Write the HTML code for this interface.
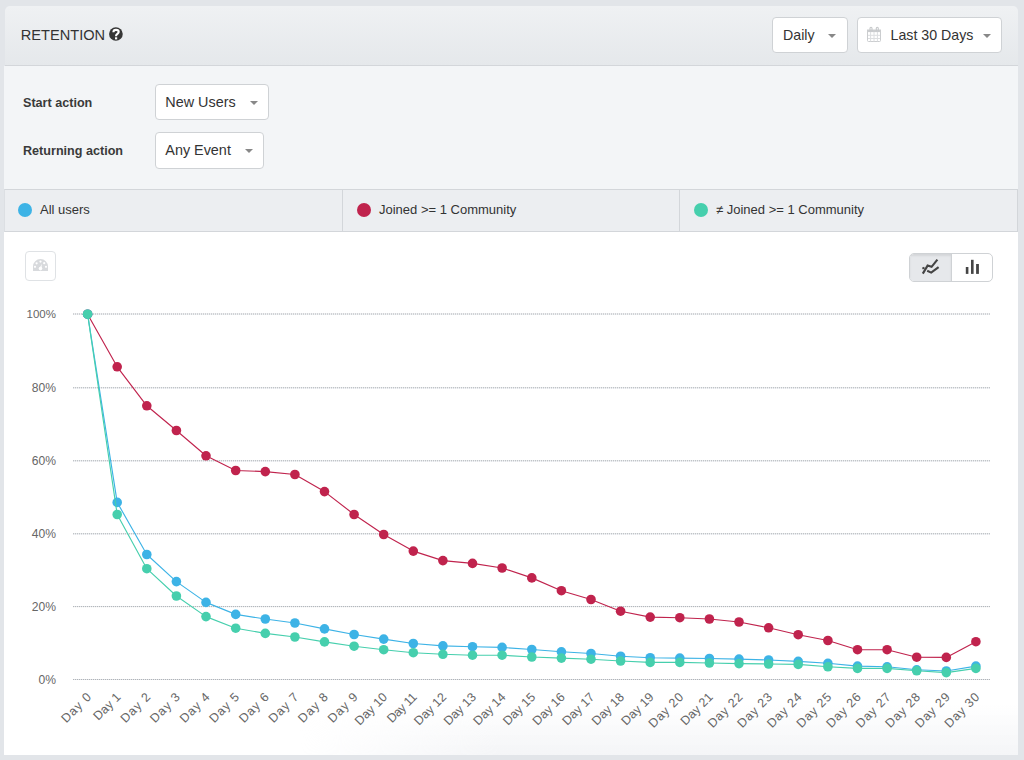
<!DOCTYPE html>
<html><head><meta charset="utf-8">
<style>
*{box-sizing:border-box;margin:0;padding:0}
html,body{width:1024px;height:760px;overflow:hidden;background:#e2e5e9;font-family:"Liberation Sans",sans-serif;color:#333}
.abs{position:absolute}
#hdr{position:absolute;left:5px;top:6px;width:1013px;height:60px;background:linear-gradient(#eff1f3,#e5e8eb);border-bottom:1px solid #d3d6da;border-radius:5px 5px 0 0}
#title{position:absolute;left:15.8px;top:20.5px;font-size:14.6px;color:#333}
.qm{position:absolute;left:104px;top:20.8px;width:14px;height:14px;border-radius:50%;background:#383838;color:#fff;font-size:11px;font-weight:bold;text-align:center;line-height:14px}
.btn{position:absolute;background:#fff;border:1px solid #cfd2d5;border-radius:4px;font-size:14.2px;color:#333}
.btn span{position:absolute;top:9px}
.caret{position:absolute;width:0;height:0;border-left:4.2px solid transparent;border-right:4.2px solid transparent;border-top:4.6px solid #888}
#filters{position:absolute;left:4px;top:66px;width:1014px;height:123px;background:#f3f5f7}
.lbl{position:absolute;left:19px;font-size:12.6px;font-weight:bold;color:#3a3a3a}
#legend{position:absolute;left:4px;top:189px;width:1014px;height:43px;background:#eceef1;border:1px solid #d3d6da;border-left-color:#dcdfe3}
.lcol{position:absolute;top:0;height:41px}
.dot{position:absolute;top:12.6px;width:14px;height:14px;border-radius:50%}
.ltxt{position:absolute;top:12px;font-size:13px;color:#333}
#chart{position:absolute;left:4px;top:232px;width:1014px;height:523px;background:#fff}
#shade{position:absolute;left:300px;top:705px;width:718px;height:50px;background:linear-gradient(rgba(244,245,247,0),rgba(244,245,247,1));-webkit-mask-image:linear-gradient(to right,transparent 0,#000 200px)}
svg text{font-family:"Liberation Sans",sans-serif;fill:#666}
.yl{font-size:11.5px}
.xl{font-size:12.5px}
</style></head><body>
<div id="hdr">
  <div id="title">RETENTION</div>
  <div class="btn" style="left:767px;top:11px;width:75.5px;height:36.4px"><span style="left:10px">Daily</span><div class="caret" style="left:55.2px;top:15.6px"></div></div>
  <div class="btn" style="left:851.6px;top:11px;width:145.4px;height:36.2px">

   <span style="left:33px">Last 30 Days</span><div class="caret" style="left:125.5px;top:15.6px"></div></div>
</div>
<div id="filters">
  <div class="lbl" style="top:30px">Start action</div>
  <div class="lbl" style="top:78px">Returning action</div>
  <div class="btn" style="left:150.7px;top:18.2px;width:114px;height:36.3px"><span style="left:9.6px;font-size:14.4px">New Users</span><div class="caret" style="left:94px;top:15.6px"></div></div>
  <div class="btn" style="left:150.7px;top:66.3px;width:109px;height:36.3px"><span style="left:9.6px;font-size:14.4px">Any Event</span><div class="caret" style="left:89px;top:15.6px"></div></div>
</div>
<div id="legend">
  <div class="lcol" style="left:0;width:337px"><div class="dot" style="left:13px;background:#3db3e6"></div><div class="ltxt" style="left:35px">All users</div></div>
  <div class="lcol" style="left:337px;width:337px;border-left:1px solid #d3d6da"><div class="dot" style="left:14px;background:#c0234d"></div><div class="ltxt" style="left:36px">Joined &gt;= 1 Community</div></div>
  <div class="lcol" style="left:674px;width:338px;border-left:1px solid #d3d6da"><div class="dot" style="left:14px;background:#46cfad"></div><div class="ltxt" style="left:36px">&ne; Joined &gt;= 1 Community</div></div>
</div>
<div id="chart">
  <div style="position:absolute;left:21px;top:18.6px;width:31px;height:30px;border:1px solid #dfe2e5;border-radius:4px"></div>
  <div style="position:absolute;left:905px;top:21px;width:84px;height:29px;border:1px solid #cfd2d5;border-radius:5px;overflow:hidden;background:#fff">
   <div style="position:absolute;left:0;top:0;width:42px;height:27px;background:#e6e8eb;border-right:1px solid #cfd2d5;box-shadow:inset 0 2px 2px rgba(0,0,0,0.08)"></div>
  </div>
</div>
<div id="shade"></div>
<svg style="position:absolute;left:0;top:0" width="1024" height="760">
<line x1="73" y1="314.0" x2="990" y2="314.0" stroke="#e2e5e9" stroke-width="1"/>
<line x1="73" y1="314.0" x2="990" y2="314.0" stroke="#b0b3b7" stroke-width="1" stroke-dasharray="1,1"/>
<text x="56" y="318.3" text-anchor="end" class="yl" style="font-size:11.5px">100%</text>
<line x1="73" y1="387.8" x2="990" y2="387.8" stroke="#e2e5e9" stroke-width="1"/>
<line x1="73" y1="387.8" x2="990" y2="387.8" stroke="#b0b3b7" stroke-width="1" stroke-dasharray="1,1"/>
<text x="56" y="392.1" text-anchor="end" class="yl" style="font-size:12.1px">80%</text>
<line x1="73" y1="460.8" x2="990" y2="460.8" stroke="#e2e5e9" stroke-width="1"/>
<line x1="73" y1="460.8" x2="990" y2="460.8" stroke="#b0b3b7" stroke-width="1" stroke-dasharray="1,1"/>
<text x="56" y="465.1" text-anchor="end" class="yl" style="font-size:12.1px">60%</text>
<line x1="73" y1="533.8" x2="990" y2="533.8" stroke="#e2e5e9" stroke-width="1"/>
<line x1="73" y1="533.8" x2="990" y2="533.8" stroke="#b0b3b7" stroke-width="1" stroke-dasharray="1,1"/>
<text x="56" y="538.1" text-anchor="end" class="yl" style="font-size:12.1px">40%</text>
<line x1="73" y1="606.6" x2="990" y2="606.6" stroke="#e2e5e9" stroke-width="1"/>
<line x1="73" y1="606.6" x2="990" y2="606.6" stroke="#b0b3b7" stroke-width="1" stroke-dasharray="1,1"/>
<text x="56" y="610.9" text-anchor="end" class="yl" style="font-size:12.1px">20%</text>
<line x1="73" y1="679.5" x2="990" y2="679.5" stroke="#e2e5e9" stroke-width="1"/>
<line x1="73" y1="679.5" x2="990" y2="679.5" stroke="#b0b3b7" stroke-width="1" stroke-dasharray="1,1"/>
<text x="56" y="683.8" text-anchor="end" class="yl" style="font-size:12.1px">0%</text>
<text transform="translate(91.90,697.9) rotate(-45)" text-anchor="end" class="xl" textLength="36.3">Day 0</text>
<text transform="translate(121.51,697.9) rotate(-45)" text-anchor="end" class="xl" textLength="32.8">Day 1</text>
<text transform="translate(151.12,697.9) rotate(-45)" text-anchor="end" class="xl" textLength="36.3">Day 2</text>
<text transform="translate(180.73,697.9) rotate(-45)" text-anchor="end" class="xl" textLength="36.3">Day 3</text>
<text transform="translate(210.34,697.9) rotate(-45)" text-anchor="end" class="xl" textLength="36.3">Day 4</text>
<text transform="translate(239.95,697.9) rotate(-45)" text-anchor="end" class="xl" textLength="36.3">Day 5</text>
<text transform="translate(269.56,697.9) rotate(-45)" text-anchor="end" class="xl" textLength="36.3">Day 6</text>
<text transform="translate(299.17,697.9) rotate(-45)" text-anchor="end" class="xl" textLength="36.3">Day 7</text>
<text transform="translate(328.78,697.9) rotate(-45)" text-anchor="end" class="xl" textLength="36.3">Day 8</text>
<text transform="translate(358.39,697.9) rotate(-45)" text-anchor="end" class="xl" textLength="36.3">Day 9</text>
<text transform="translate(388.00,697.9) rotate(-45)" text-anchor="end" class="xl" textLength="39.8">Day 10</text>
<text transform="translate(417.61,697.9) rotate(-45)" text-anchor="end" class="xl" textLength="36.3">Day 11</text>
<text transform="translate(447.22,697.9) rotate(-45)" text-anchor="end" class="xl" textLength="39.8">Day 12</text>
<text transform="translate(476.83,697.9) rotate(-45)" text-anchor="end" class="xl" textLength="39.8">Day 13</text>
<text transform="translate(506.44,697.9) rotate(-45)" text-anchor="end" class="xl" textLength="39.8">Day 14</text>
<text transform="translate(536.05,697.9) rotate(-45)" text-anchor="end" class="xl" textLength="39.8">Day 15</text>
<text transform="translate(565.66,697.9) rotate(-45)" text-anchor="end" class="xl" textLength="39.8">Day 16</text>
<text transform="translate(595.27,697.9) rotate(-45)" text-anchor="end" class="xl" textLength="39.8">Day 17</text>
<text transform="translate(624.88,697.9) rotate(-45)" text-anchor="end" class="xl" textLength="39.8">Day 18</text>
<text transform="translate(654.49,697.9) rotate(-45)" text-anchor="end" class="xl" textLength="39.8">Day 19</text>
<text transform="translate(684.10,697.9) rotate(-45)" text-anchor="end" class="xl" textLength="43.3">Day 20</text>
<text transform="translate(713.71,697.9) rotate(-45)" text-anchor="end" class="xl" textLength="39.8">Day 21</text>
<text transform="translate(743.32,697.9) rotate(-45)" text-anchor="end" class="xl" textLength="43.3">Day 22</text>
<text transform="translate(772.93,697.9) rotate(-45)" text-anchor="end" class="xl" textLength="43.3">Day 23</text>
<text transform="translate(802.54,697.9) rotate(-45)" text-anchor="end" class="xl" textLength="43.3">Day 24</text>
<text transform="translate(832.15,697.9) rotate(-45)" text-anchor="end" class="xl" textLength="43.3">Day 25</text>
<text transform="translate(861.76,697.9) rotate(-45)" text-anchor="end" class="xl" textLength="43.3">Day 26</text>
<text transform="translate(891.37,697.9) rotate(-45)" text-anchor="end" class="xl" textLength="43.3">Day 27</text>
<text transform="translate(920.98,697.9) rotate(-45)" text-anchor="end" class="xl" textLength="43.3">Day 28</text>
<text transform="translate(950.59,697.9) rotate(-45)" text-anchor="end" class="xl" textLength="43.3">Day 29</text>
<text transform="translate(980.20,697.9) rotate(-45)" text-anchor="end" class="xl" textLength="43.3">Day 30</text>
<polyline points="87.6,314.2 117.2,366.8 146.8,405.8 176.4,430.5 206.0,455.8 235.7,470.5 265.3,471.6 294.9,474.5 324.5,491.6 354.1,514.5 383.7,534.5 413.3,551.1 442.9,560.6 472.5,563.4 502.1,568.0 531.8,577.9 561.4,590.7 591.0,599.5 620.6,611.2 650.2,617.1 679.8,617.7 709.4,619.0 739.0,622.0 768.6,627.8 798.2,634.7 827.9,640.5 857.5,649.7 887.1,649.7 916.7,657.2 946.3,657.4 975.9,641.7" fill="none" stroke="#c0234d" stroke-width="1.15" stroke-linejoin="round"/>
<circle cx="87.6" cy="314.2" r="4.8" fill="#c0234d"/><circle cx="117.2" cy="366.8" r="4.8" fill="#c0234d"/><circle cx="146.8" cy="405.8" r="4.8" fill="#c0234d"/><circle cx="176.4" cy="430.5" r="4.8" fill="#c0234d"/><circle cx="206.0" cy="455.8" r="4.8" fill="#c0234d"/><circle cx="235.7" cy="470.5" r="4.8" fill="#c0234d"/><circle cx="265.3" cy="471.6" r="4.8" fill="#c0234d"/><circle cx="294.9" cy="474.5" r="4.8" fill="#c0234d"/><circle cx="324.5" cy="491.6" r="4.8" fill="#c0234d"/><circle cx="354.1" cy="514.5" r="4.8" fill="#c0234d"/><circle cx="383.7" cy="534.5" r="4.8" fill="#c0234d"/><circle cx="413.3" cy="551.1" r="4.8" fill="#c0234d"/><circle cx="442.9" cy="560.6" r="4.8" fill="#c0234d"/><circle cx="472.5" cy="563.4" r="4.8" fill="#c0234d"/><circle cx="502.1" cy="568.0" r="4.8" fill="#c0234d"/><circle cx="531.8" cy="577.9" r="4.8" fill="#c0234d"/><circle cx="561.4" cy="590.7" r="4.8" fill="#c0234d"/><circle cx="591.0" cy="599.5" r="4.8" fill="#c0234d"/><circle cx="620.6" cy="611.2" r="4.8" fill="#c0234d"/><circle cx="650.2" cy="617.1" r="4.8" fill="#c0234d"/><circle cx="679.8" cy="617.7" r="4.8" fill="#c0234d"/><circle cx="709.4" cy="619.0" r="4.8" fill="#c0234d"/><circle cx="739.0" cy="622.0" r="4.8" fill="#c0234d"/><circle cx="768.6" cy="627.8" r="4.8" fill="#c0234d"/><circle cx="798.2" cy="634.7" r="4.8" fill="#c0234d"/><circle cx="827.9" cy="640.5" r="4.8" fill="#c0234d"/><circle cx="857.5" cy="649.7" r="4.8" fill="#c0234d"/><circle cx="887.1" cy="649.7" r="4.8" fill="#c0234d"/><circle cx="916.7" cy="657.2" r="4.8" fill="#c0234d"/><circle cx="946.3" cy="657.4" r="4.8" fill="#c0234d"/><circle cx="975.9" cy="641.7" r="4.8" fill="#c0234d"/>

<polyline points="87.6,314.2 117.2,502.4 146.8,554.5 176.4,581.6 206.0,602.4 235.7,614.4 265.3,619.0 294.9,623.0 324.5,628.9 354.1,634.5 383.7,639.1 413.3,643.5 442.9,645.9 472.5,646.7 502.1,647.4 531.8,649.5 561.4,651.8 591.0,653.5 620.6,656.2 650.2,657.7 679.8,658.1 709.4,658.5 739.0,659.1 768.6,660.0 798.2,661.4 827.9,663.3 857.5,666.1 887.1,666.8 916.7,669.8 946.3,671.0 975.9,666.1" fill="none" stroke="#3db3e6" stroke-width="1.15" stroke-linejoin="round"/>
<circle cx="87.6" cy="314.2" r="4.8" fill="#3db3e6"/><circle cx="117.2" cy="502.4" r="4.8" fill="#3db3e6"/><circle cx="146.8" cy="554.5" r="4.8" fill="#3db3e6"/><circle cx="176.4" cy="581.6" r="4.8" fill="#3db3e6"/><circle cx="206.0" cy="602.4" r="4.8" fill="#3db3e6"/><circle cx="235.7" cy="614.4" r="4.8" fill="#3db3e6"/><circle cx="265.3" cy="619.0" r="4.8" fill="#3db3e6"/><circle cx="294.9" cy="623.0" r="4.8" fill="#3db3e6"/><circle cx="324.5" cy="628.9" r="4.8" fill="#3db3e6"/><circle cx="354.1" cy="634.5" r="4.8" fill="#3db3e6"/><circle cx="383.7" cy="639.1" r="4.8" fill="#3db3e6"/><circle cx="413.3" cy="643.5" r="4.8" fill="#3db3e6"/><circle cx="442.9" cy="645.9" r="4.8" fill="#3db3e6"/><circle cx="472.5" cy="646.7" r="4.8" fill="#3db3e6"/><circle cx="502.1" cy="647.4" r="4.8" fill="#3db3e6"/><circle cx="531.8" cy="649.5" r="4.8" fill="#3db3e6"/><circle cx="561.4" cy="651.8" r="4.8" fill="#3db3e6"/><circle cx="591.0" cy="653.5" r="4.8" fill="#3db3e6"/><circle cx="620.6" cy="656.2" r="4.8" fill="#3db3e6"/><circle cx="650.2" cy="657.7" r="4.8" fill="#3db3e6"/><circle cx="679.8" cy="658.1" r="4.8" fill="#3db3e6"/><circle cx="709.4" cy="658.5" r="4.8" fill="#3db3e6"/><circle cx="739.0" cy="659.1" r="4.8" fill="#3db3e6"/><circle cx="768.6" cy="660.0" r="4.8" fill="#3db3e6"/><circle cx="798.2" cy="661.4" r="4.8" fill="#3db3e6"/><circle cx="827.9" cy="663.3" r="4.8" fill="#3db3e6"/><circle cx="857.5" cy="666.1" r="4.8" fill="#3db3e6"/><circle cx="887.1" cy="666.8" r="4.8" fill="#3db3e6"/><circle cx="916.7" cy="669.8" r="4.8" fill="#3db3e6"/><circle cx="946.3" cy="671.0" r="4.8" fill="#3db3e6"/><circle cx="975.9" cy="666.1" r="4.8" fill="#3db3e6"/>

<polyline points="87.6,314.2 117.2,514.5 146.8,568.7 176.4,596.0 206.0,616.6 235.7,628.2 265.3,633.4 294.9,637.0 324.5,641.9 354.1,646.2 383.7,649.7 413.3,652.7 442.9,654.3 472.5,655.2 502.1,655.2 531.8,657.0 561.4,658.1 591.0,659.2 620.6,661.0 650.2,662.4 679.8,662.4 709.4,663.0 739.0,663.6 768.6,664.0 798.2,664.4 827.9,666.8 857.5,668.4 887.1,668.4 916.7,670.8 946.3,672.6 975.9,668.4" fill="none" stroke="#46cfad" stroke-width="1.15" stroke-linejoin="round"/>
<circle cx="87.6" cy="314.2" r="4.8" fill="#46cfad"/><circle cx="117.2" cy="514.5" r="4.8" fill="#46cfad"/><circle cx="146.8" cy="568.7" r="4.8" fill="#46cfad"/><circle cx="176.4" cy="596.0" r="4.8" fill="#46cfad"/><circle cx="206.0" cy="616.6" r="4.8" fill="#46cfad"/><circle cx="235.7" cy="628.2" r="4.8" fill="#46cfad"/><circle cx="265.3" cy="633.4" r="4.8" fill="#46cfad"/><circle cx="294.9" cy="637.0" r="4.8" fill="#46cfad"/><circle cx="324.5" cy="641.9" r="4.8" fill="#46cfad"/><circle cx="354.1" cy="646.2" r="4.8" fill="#46cfad"/><circle cx="383.7" cy="649.7" r="4.8" fill="#46cfad"/><circle cx="413.3" cy="652.7" r="4.8" fill="#46cfad"/><circle cx="442.9" cy="654.3" r="4.8" fill="#46cfad"/><circle cx="472.5" cy="655.2" r="4.8" fill="#46cfad"/><circle cx="502.1" cy="655.2" r="4.8" fill="#46cfad"/><circle cx="531.8" cy="657.0" r="4.8" fill="#46cfad"/><circle cx="561.4" cy="658.1" r="4.8" fill="#46cfad"/><circle cx="591.0" cy="659.2" r="4.8" fill="#46cfad"/><circle cx="620.6" cy="661.0" r="4.8" fill="#46cfad"/><circle cx="650.2" cy="662.4" r="4.8" fill="#46cfad"/><circle cx="679.8" cy="662.4" r="4.8" fill="#46cfad"/><circle cx="709.4" cy="663.0" r="4.8" fill="#46cfad"/><circle cx="739.0" cy="663.6" r="4.8" fill="#46cfad"/><circle cx="768.6" cy="664.0" r="4.8" fill="#46cfad"/><circle cx="798.2" cy="664.4" r="4.8" fill="#46cfad"/><circle cx="827.9" cy="666.8" r="4.8" fill="#46cfad"/><circle cx="857.5" cy="668.4" r="4.8" fill="#46cfad"/><circle cx="887.1" cy="668.4" r="4.8" fill="#46cfad"/><circle cx="916.7" cy="670.8" r="4.8" fill="#46cfad"/><circle cx="946.3" cy="672.6" r="4.8" fill="#46cfad"/><circle cx="975.9" cy="668.4" r="4.8" fill="#46cfad"/>

<g>
 <rect x="867.5" y="30.5" width="13" height="11" fill="#fff" stroke="#cbcdcf" rx="1"/>
 <rect x="867" y="29.5" width="14" height="2.6" fill="#cbcdcf"/>
 <path d="M870.6 32v9.5M874 32v9.5M877.4 32v9.5M868 35.3h12M868 38.5h12" stroke="#dcdee0" stroke-width="1"/>
 <path d="M870 31.5v-3.2a1 1 0 0 1 2 0v3.2M876.3 31.5v-3.2a1 1 0 0 1 2 0v3.2" fill="none" stroke="#c6c8ca" stroke-width="1.1"/>
</g>
<g>
 <circle cx="115.9" cy="34" r="6.85" fill="#363636"/>
 <path d="M113.4,32.3 C113.4,30.7 114.5,29.9 116,29.9 C117.6,29.9 118.7,30.8 118.7,32.1 C118.7,33.7 116.1,34 116.1,35.7 L116.1,36.3" fill="none" stroke="#fff" stroke-width="2.1"/>
 <rect x="115" y="37.3" width="2.2" height="2.1" fill="#fff"/>
</g>
<g fill="#d8dadd">
 <path d="M33,271 L33,266.5 A7.5,7.5 0 0 1 48,266.5 L48,271 Z"/>
</g>
<g fill="#fff">
 <circle cx="36.6" cy="263.3" r="1.1"/><circle cx="40.5" cy="261.6" r="1.1"/><circle cx="44.2" cy="263.2" r="1.1"/><circle cx="35" cy="266.8" r="1.1"/><circle cx="46" cy="266.8" r="1.1"/>
 <circle cx="40.5" cy="268.6" r="1.8"/><path d="M39.6,268.2 L41.7,264 L41.6,268.8 Z"/>
</g>
<g fill="none" stroke="#444" stroke-width="2.1" stroke-linejoin="miter" stroke-linecap="butt">
 <path d="M922.8,273.6 L927.6,265.6 L931.6,266.8 L937.4,259.6"/>
 <path d="M922.4,268.6 L924.5,267.6"/>
 <path d="M927.2,270.8 L931.2,272.6 L938.6,267.2"/>
</g>
<g fill="#454545">
 <rect x="965.8" y="267" width="2.6" height="6.9"/><rect x="971" y="259.8" width="2.6" height="14.1"/><rect x="976.1" y="264" width="2.8" height="9.9"/>
</g>
</svg>
</body></html>
